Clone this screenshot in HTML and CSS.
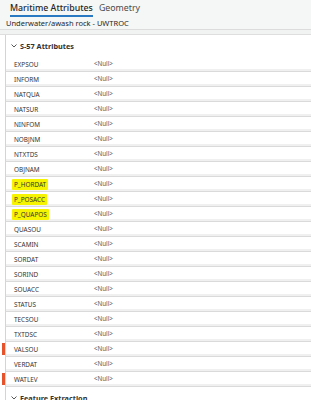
FILE: index.html
```html
<!DOCTYPE html>
<html>
<head>
<meta charset="utf-8">
<link rel="stylesheet" href="styles.css">
</head>
<body>
<div class="top">
  <div class="tabs">
    <span class="tab active">Maritime Attributes</span>
    <span class="tab">Geometry</span>
  </div>
  <div class="title">Underwater/awash rock - UWTROC</div>
</div>
<div class="sep"></div>
<div class="panel">
  <div class="line head">
    <span class="mark"></span>
    <div class="cell">
      <svg class="chev" width="6" height="4" viewBox="0 0 6 4"><path d="M0.5 0.5 L3 3 L5.5 0.5" fill="none" stroke="#444" stroke-width="0.9"/></svg>
      <span>S-57 Attributes</span>
    </div>
  </div>
  <div class="line row"><span class="mark"></span><div class="cell"><span class="lbl">EXPSOU</span><span class="val">&lt;Null&gt;</span></div></div>
  <div class="line row"><span class="mark"></span><div class="cell"><span class="lbl">INFORM</span><span class="val">&lt;Null&gt;</span></div></div>
  <div class="line row"><span class="mark"></span><div class="cell"><span class="lbl">NATQUA</span><span class="val">&lt;Null&gt;</span></div></div>
  <div class="line row"><span class="mark"></span><div class="cell"><span class="lbl">NATSUR</span><span class="val">&lt;Null&gt;</span></div></div>
  <div class="line row"><span class="mark"></span><div class="cell"><span class="lbl">NINFOM</span><span class="val">&lt;Null&gt;</span></div></div>
  <div class="line row"><span class="mark"></span><div class="cell"><span class="lbl">NOBJNM</span><span class="val">&lt;Null&gt;</span></div></div>
  <div class="line row"><span class="mark"></span><div class="cell"><span class="lbl">NTXTDS</span><span class="val">&lt;Null&gt;</span></div></div>
  <div class="line row"><span class="mark"></span><div class="cell"><span class="lbl">OBJNAM</span><span class="val">&lt;Null&gt;</span></div></div>
  <div class="line row"><span class="mark"></span><div class="cell"><span class="lbl"><span class="hl">P_HORDAT</span></span><span class="val">&lt;Null&gt;</span></div></div>
  <div class="line row"><span class="mark"></span><div class="cell"><span class="lbl"><span class="hl">P_POSACC</span></span><span class="val">&lt;Null&gt;</span></div></div>
  <div class="line row"><span class="mark"></span><div class="cell"><span class="lbl"><span class="hl">P_QUAPOS</span></span><span class="val">&lt;Null&gt;</span></div></div>
  <div class="line row"><span class="mark"></span><div class="cell"><span class="lbl">QUASOU</span><span class="val">&lt;Null&gt;</span></div></div>
  <div class="line row"><span class="mark"></span><div class="cell"><span class="lbl">SCAMIN</span><span class="val">&lt;Null&gt;</span></div></div>
  <div class="line row"><span class="mark"></span><div class="cell"><span class="lbl">SORDAT</span><span class="val">&lt;Null&gt;</span></div></div>
  <div class="line row"><span class="mark"></span><div class="cell"><span class="lbl">SORIND</span><span class="val">&lt;Null&gt;</span></div></div>
  <div class="line row"><span class="mark"></span><div class="cell"><span class="lbl">SOUACC</span><span class="val">&lt;Null&gt;</span></div></div>
  <div class="line row"><span class="mark"></span><div class="cell"><span class="lbl">STATUS</span><span class="val">&lt;Null&gt;</span></div></div>
  <div class="line row"><span class="mark"></span><div class="cell"><span class="lbl">TECSOU</span><span class="val">&lt;Null&gt;</span></div></div>
  <div class="line row"><span class="mark"></span><div class="cell"><span class="lbl">TXTDSC</span><span class="val">&lt;Null&gt;</span></div></div>
  <div class="line row"><span class="mark req"></span><div class="cell"><span class="lbl">VALSOU</span><span class="val">&lt;Null&gt;</span></div></div>
  <div class="line row"><span class="mark"></span><div class="cell"><span class="lbl">VERDAT</span><span class="val">&lt;Null&gt;</span></div></div>
  <div class="line row"><span class="mark req"></span><div class="cell"><span class="lbl">WATLEV</span><span class="val">&lt;Null&gt;</span></div></div>
  <div class="line head">
    <span class="mark"></span>
    <div class="cell">
      <svg class="chev" width="6" height="4" viewBox="0 0 6 4"><path d="M0.5 0.5 L3 3 L5.5 0.5" fill="none" stroke="#444" stroke-width="0.9"/></svg>
      <span>Feature Extraction</span>
    </div>
  </div>
</div>
</body>
</html>
```

FILE: styles.css
```css
html, body {
  margin: 0;
  padding: 0;
  background: #ffffff;
  font-family: "Noto Sans", "Open Sans", sans-serif;
  color: #2b2b2b;
  overflow: hidden;
}

.top {
  background: #f5f6f6;
  height: 29px;
  display: flex;
  flex-direction: column;
}

.tabs {
  display: flex;
  gap: 6px;
  padding-left: 10px;
  height: 17px;
  align-items: flex-end;
}

.tab {
  font-size: 8.8px;
  line-height: 13px;
  color: #4a4a4a;
  padding-bottom: 2px;
}

.tab.active {
  color: #262626;
  font-weight: 500;
  border-bottom: 2px solid #2979c2;
  padding-bottom: 0;
}

.title {
  font-size: 7.5px;
  line-height: 10px;
  padding-left: 6px;
  margin-top: 1px;
  color: #1f1f1f;
}

.sep {
  height: 4px;
  border-top: 1px solid #dcdcdc;
  border-bottom: 1px solid #dedede;
  background: #f1f2f2;
}

.panel {
  display: flex;
  flex-direction: column;
}

.line {
  display: flex;
  height: 15px;
}

.mark {
  width: 5px;
  flex: none;
  box-sizing: border-box;
  padding: 1px 1px 2px 2px;
}

.mark.req::before {
  content: "";
  display: block;
  width: 2.5px;
  height: 12px;
  background: #e5532c;
}

.cell {
  flex: 1;
  display: flex;
  align-items: center;
  border-left: 1px solid #d4d4d4;
}

.head {
  height: 22px;
}

.head .cell {
  padding-left: 5px;
  gap: 3px;
  font-size: 7.3px;
  font-weight: 700;
  color: #333;
}

.chev {
  flex: none;
}

.row .cell {
  border-bottom: 1px solid #dadada;
  box-shadow: inset 0 -2px 0 #f0f0f0;
  box-sizing: border-box;
}

.lbl {
  width: 80px;
  padding-left: 8px;
  flex: none;
  font-size: 6.4px;
  color: #333;
}

.hl {
  background: #f6f400;
  padding: 1px 2px;
  margin-left: -2px;
  border-radius: 1px;
}

.val {
  font-size: 6.2px;
  color: #5a5a5a;
  position: relative;
  top: -1px;
}
```
